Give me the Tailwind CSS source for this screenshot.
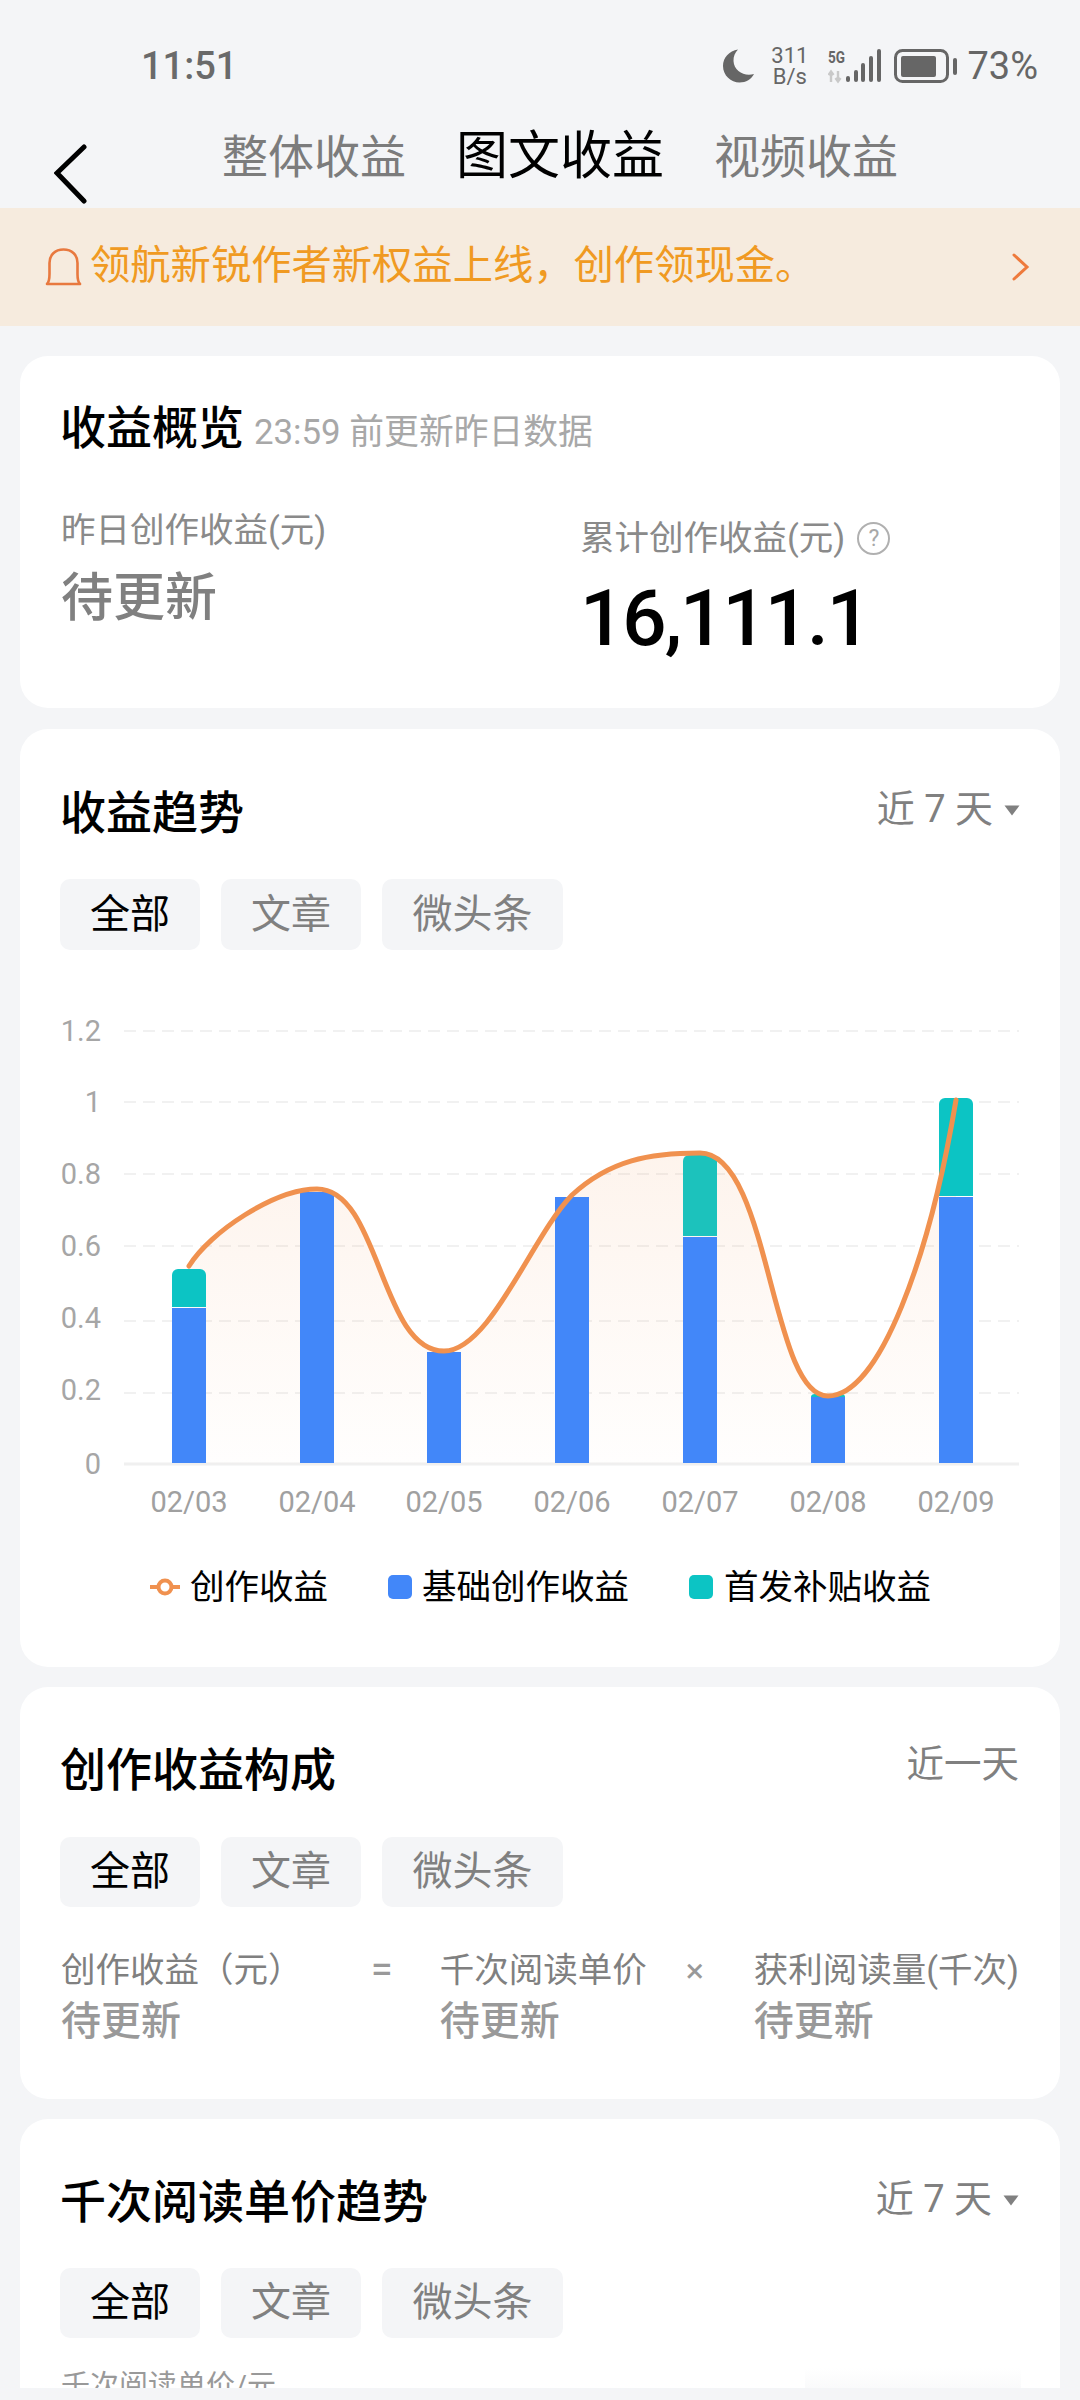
<!DOCTYPE html>
<html lang="zh">
<head>
<meta charset="utf-8">
<script src="https://cdn.jsdelivr.net/npm/@tailwindcss/browser@4"></script>
</head>
<body class="m-0 bg-[#f4f5f7] font-['Roboto','Noto_Sans_CJK_SC',sans-serif]">
<div class="w-[1080px] h-[2400px] overflow-hidden bg-[#f4f5f7] flex flex-col">

  <!-- status bar -->
  <div class="h-[112px] shrink-0 pt-[20px] flex items-start text-[#666666]">
    <div class="h-[92px] w-full flex items-center pl-[141px] pr-[42px]">
      <span class="text-[38px] leading-none font-medium text-[#6a6a6a]">11:51</span>
      <div class="ml-auto flex items-center">
        <svg width="34" height="36" viewBox="0 0 34 36" class="mr-[15px]"><path d="M16 1.5 C7 3 1 9.5 1 18 C1 27.5 9 34.5 17.5 34.5 C24 34.5 29.5 31 32 26 C22.5 29 12 23 11.5 13 C11.3 8.5 13 4.5 16 1.5 Z" fill="#666666"/></svg>
        <div class="flex flex-col items-center text-[22px] leading-[21px] mr-[20px] text-[#666666]"><span>311</span><span>B/s</span></div>
        <svg width="56" height="36" viewBox="0 0 56 36" class="mr-[10px]">
          <path d="M3 34 V24 M0.5 27 L3 23.5 L5.5 27" stroke="#c9c9c9" stroke-width="2.4" fill="none"/>
          <path d="M10 23 V33 M7.5 30 L10 33.5 L12.5 30" stroke="#c9c9c9" stroke-width="2.4" fill="none"/>
          <rect x="18" y="28" width="4" height="6" rx="2" fill="#666666"/>
          <rect x="26" y="22" width="4" height="12" rx="2" fill="#666666"/>
          <rect x="33" y="15" width="4" height="19" rx="2" fill="#666666"/>
          <rect x="41" y="8" width="4" height="26" rx="2" fill="#666666"/>
          <rect x="49" y="1" width="4" height="33" rx="2" fill="#666666"/>
          <text x="0" y="15" font-size="17" font-weight="700" fill="#666666" textLength="17" lengthAdjust="spacingAndGlyphs">5G</text>
        </svg>
        <svg width="64" height="34" viewBox="0 0 64 34" class="mr-[9px]">
          <rect x="1.5" y="1.5" width="52" height="31" rx="7" fill="none" stroke="#666666" stroke-width="3"/>
          <rect x="7" y="7" width="35" height="21" rx="2" fill="#666666"/>
          <rect x="59" y="9" width="4" height="17" rx="2" fill="#666666"/>
        </svg>
        <span class="text-[38px] leading-none text-[#666666]">73%</span>
      </div>
    </div>
  </div>

  <!-- tabs -->
  <div class="h-[96px] shrink-0 flex items-start pl-[54px]">
    <svg width="34" height="60" viewBox="0 0 34 60" class="mt-[32px] shrink-0"><path d="M30 3 L3 29 L30 57" fill="none" stroke="#000000" stroke-width="5" stroke-linecap="round" stroke-linejoin="miter"/></svg>
    <div class="ml-[134px] flex items-center gap-[50px] h-[90px]">
      <span class="text-[46px] leading-none text-[#7c7c7c]">整体收益</span>
      <span class="text-[52px] leading-none text-black">图文收益</span>
      <span class="text-[46px] leading-none text-[#7c7c7c]">视频收益</span>
    </div>
  </div>

  <!-- banner -->
  <div class="h-[118px] shrink-0 bg-[#f6ebde] flex items-center pl-[45px] pr-[50px]">
    <svg width="37" height="38" viewBox="0 0 37 38" class="shrink-0 mr-[8px]"><path d="M2 36 C4 34 4.5 30 4.5 26 V15 C4.5 7 10 1.5 18.5 1.5 C27 1.5 32.5 7 32.5 15 V26 C32.5 30 33 34 35 36 Z" fill="none" stroke="#e8793f" stroke-width="2.6" stroke-linejoin="round"/></svg>
    <span class="text-[40.3px] leading-none text-[#f09a22] whitespace-nowrap -mt-[1px]">领航新锐作者新权益上线，创作领现金。</span>
    <svg width="18" height="28" viewBox="0 0 18 28" class="ml-auto shrink-0"><path d="M2 2 L15 14 L2 26" fill="none" stroke="#ee7a3c" stroke-width="3" stroke-linecap="round"/></svg>
  </div>

  <!-- cards -->
  <div class="flex-1 min-h-0 flex flex-col gap-[20px] px-[20px] pt-[30px] pb-[12px]">

    <!-- overview -->
    <section class="h-[352px] shrink-0 bg-white rounded-[28px] pl-[41px] pr-[40px] pt-[50px]">
      <div class="flex items-center h-[44px]">
        <h2 class="text-[46px] leading-none font-medium text-black -ml-[1px]">收益概览</h2>
        <span class="ml-[10px] mt-[9px] text-[34.8px] leading-none text-[#a8a8a8]">23:59 前更新昨日数据</span>
      </div>
      <div class="flex mt-[62px]">
        <div class="w-[519px]">
          <div class="text-[34.5px] leading-[36px] text-[#8a8a8a]">昨日创作收益(元)</div>
          <div class="mt-[26px] text-[52px] leading-[50px] font-medium text-[#808080]">待更新</div>
        </div>
        <div class="pt-[8px]">
          <div class="flex items-center h-[36px]">
            <span class="text-[34.5px] leading-none text-[#8a8a8a]">累计创作收益(元)</span>
            <span class="ml-[12px] w-[33px] h-[33px] rounded-full border-[2px] border-[#b0b0b0] text-[#a8a8a8] text-[23px] leading-none flex items-center justify-center">?</span>
          </div>
          <div class="mt-[24px] text-[78px] leading-[78px] font-medium text-black tracking-[-2px]">16,111.1</div>
        </div>
      </div>
    </section>

    <!-- trend -->
    <section class="h-[938px] mt-[1px] shrink-0 bg-white rounded-[28px] pl-[40px] pr-[40px] pt-[62px]">
      <div class="flex items-center justify-between h-[44px]">
        <h2 class="text-[46px] leading-none font-medium text-black">收益趋势</h2>
        <div class="flex items-center text-[38px] leading-none text-[#808080] mb-[8px]">
          <span>近 7 天</span>
          <svg width="16" height="11" viewBox="0 0 16 11" class="ml-[11px] mt-[2px]"><path d="M0.5 0.5 H15.5 L8 10.5 Z" fill="#808080"/></svg>
        </div>
      </div>
      <div class="flex gap-[21px] mt-[44px]">
        <span class="h-[71px] px-[30px] rounded-[10px] bg-[#f4f5f7] flex items-center text-[40px] leading-none text-black">全部</span>
        <span class="h-[71px] px-[30px] rounded-[10px] bg-[#f4f5f7] flex items-center text-[40px] leading-none text-[#808080]">文章</span>
        <span class="h-[71px] px-[30.5px] rounded-[10px] bg-[#f4f5f7] flex items-center text-[40px] leading-none text-[#808080]">微头条</span>
      </div>
      <svg width="1040" height="620" viewBox="20 1000 1040 620" class="block -ml-[40px] mt-[50px]">
        <defs>
          <linearGradient id="area" x1="0" y1="0" x2="0" y2="1">
            <stop offset="0" stop-color="#f39a5b" stop-opacity="0.13"/>
            <stop offset="1" stop-color="#f39a5b" stop-opacity="0.01"/>
          </linearGradient>
        </defs>
        <g stroke="#f1f1f1" stroke-width="2" stroke-dasharray="12 7">
          <line x1="124" x2="1019" y1="1031" y2="1031"/>
          <line x1="124" x2="1019" y1="1102" y2="1102"/>
          <line x1="124" x2="1019" y1="1174" y2="1174"/>
          <line x1="124" x2="1019" y1="1246" y2="1246"/>
          <line x1="124" x2="1019" y1="1321" y2="1321"/>
          <line x1="124" x2="1019" y1="1393" y2="1393"/>
        </g>
        <line x1="124" x2="1019" y1="1464" y2="1464" stroke="#f0f0f0" stroke-width="3"/>
        <g fill="#a6a6a6" font-size="29" text-anchor="end">
          <text x="101" y="1041">1.2</text>
          <text x="101" y="1112">1</text>
          <text x="101" y="1184">0.8</text>
          <text x="101" y="1256">0.6</text>
          <text x="101" y="1328">0.4</text>
          <text x="101" y="1400">0.2</text>
          <text x="101" y="1474">0</text>
        </g>
        <path d="M189 1266 C210 1232 275 1189 317 1189 C380 1189 380 1351 444 1351 C490 1351 532 1236 572 1195 C610 1160 650 1153 700 1153 C770 1153 770 1396 828 1396 C880 1396 930 1255 956 1100 L956 1464 L189 1464 Z" fill="url(#area)"/>
        <rect x="172" y="1308" width="34" height="155" fill="#4287f9"/>
        <path d="M172 1307 V1275 a6 6 0 0 1 6-6 h22 a6 6 0 0 1 6 6 V1307 Z" fill="#0cc4c4"/>
        <rect x="300" y="1192" width="34" height="271" fill="#4287f9"/>
        <rect x="427" y="1352" width="34" height="111" fill="#4287f9"/>
        <rect x="555" y="1197" width="34" height="266" fill="#4287f9"/>
        <rect x="683" y="1237" width="34" height="226" fill="#4287f9"/>
        <path d="M683 1236 V1161 a6 6 0 0 1 6-6 h22 a6 6 0 0 1 6 6 V1236 Z" fill="#1cc2bc"/>
        <rect x="811" y="1397" width="34" height="66" fill="#4287f9"/>
        <path d="M811 1397 a4 3 0 0 1 4-3 h26 a4 3 0 0 1 4 3 Z" fill="#0cc4c4"/>
        <rect x="939" y="1197" width="34" height="266" fill="#4287f9"/>
        <path d="M939 1196 V1104 a6 6 0 0 1 6-6 h22 a6 6 0 0 1 6 6 V1196 Z" fill="#0cc4c4"/>
        <path d="M189 1266 C210 1232 275 1189 317 1189 C380 1189 380 1351 444 1351 C490 1351 532 1236 572 1195 C610 1160 650 1153 700 1153 C770 1153 770 1396 828 1396 C880 1396 930 1255 956 1100" fill="none" stroke="#f0914f" stroke-width="5" stroke-linecap="round"/>
        <g fill="#a0a0a0" font-size="29" text-anchor="middle">
          <text x="189" y="1512">02/03</text>
          <text x="317" y="1512">02/04</text>
          <text x="444" y="1512">02/05</text>
          <text x="572" y="1512">02/06</text>
          <text x="700" y="1512">02/07</text>
          <text x="828" y="1512">02/08</text>
          <text x="956" y="1512">02/09</text>
        </g>
        <line x1="150" x2="180" y1="1587" y2="1587" stroke="#f0914f" stroke-width="4"/>
        <circle cx="165" cy="1587" r="6.5" fill="#ffffff" stroke="#f0914f" stroke-width="4"/>
        <text x="190" y="1599" font-size="34.5" fill="#000000">创作收益</text>
        <rect x="388" y="1575" width="24" height="24" rx="5" fill="#4287f9"/>
        <text x="422" y="1599" font-size="34.5" fill="#000000">基础创作收益</text>
        <rect x="689" y="1575" width="24" height="24" rx="5" fill="#0cc4c4"/>
        <text x="724" y="1599" font-size="34.5" fill="#000000">首发补贴收益</text>
      </svg>
    </section>

    <!-- composition -->
    <section class="h-[412px] shrink-0 bg-white rounded-[28px] pl-[39px] pr-[41px] pt-[61px]">
      <div class="flex items-center justify-between h-[44px] pl-[1px]">
        <h2 class="text-[46px] leading-none font-medium text-black">创作收益构成</h2>
        <span class="text-[37.5px] leading-none text-[#808080] mb-[10px]">近一天</span>
      </div>
      <div class="flex gap-[21px] mt-[45px] pl-[1px]">
        <span class="h-[70px] px-[30px] rounded-[10px] bg-[#f4f5f7] flex items-center text-[40px] leading-none text-black">全部</span>
        <span class="h-[70px] px-[30px] rounded-[10px] bg-[#f4f5f7] flex items-center text-[40px] leading-none text-[#808080]">文章</span>
        <span class="h-[70px] px-[30.5px] rounded-[10px] bg-[#f4f5f7] flex items-center text-[40px] leading-none text-[#808080]">微头条</span>
      </div>
      <div class="flex justify-between mt-[45px] pl-[2px]">
        <div class="w-[310px]">
          <div class="text-[34.5px] leading-[36px] text-[#808080]">创作收益（元）</div>
          <div class="mt-[14px] text-[40px] leading-[40px] font-medium text-[#999999]">待更新</div>
        </div>
        <div class="w-[69px] text-[40px] leading-[36px] text-[#999999]">=</div>
        <div class="w-[246px]">
          <div class="text-[34.5px] leading-[36px] text-[#808080]">千次阅读单价</div>
          <div class="mt-[14px] text-[40px] leading-[40px] font-medium text-[#999999]">待更新</div>
        </div>
        <div class="w-[68px] text-[34px] leading-[36px] text-[#999999]">×</div>
        <div class="flex-1">
          <div class="text-[34.5px] leading-[36px] text-[#808080] whitespace-nowrap">获利阅读量(千次)</div>
          <div class="mt-[14px] text-[40px] leading-[40px] font-medium text-[#999999]">待更新</div>
        </div>
      </div>
    </section>

    <!-- unit price trend -->
    <section class="h-[269px] shrink-0 bg-white rounded-t-[28px] overflow-hidden pl-[39px] pr-[41px] pt-[61px] relative">
      <div class="flex items-center justify-between h-[44px] pl-[1px]">
        <h2 class="text-[46px] leading-none font-medium text-black">千次阅读单价趋势</h2>
        <div class="flex items-center text-[38px] leading-none text-[#808080] mb-[6px]">
          <span>近 7 天</span>
          <svg width="16" height="11" viewBox="0 0 16 11" class="ml-[11px] mt-[2px]"><path d="M0.5 0.5 H15.5 L8 10.5 Z" fill="#808080"/></svg>
        </div>
      </div>
      <div class="flex gap-[21px] mt-[44px] pl-[1px]">
        <span class="h-[70px] px-[30px] rounded-[10px] bg-[#f4f5f7] flex items-center text-[40px] leading-none text-black">全部</span>
        <span class="h-[70px] px-[30px] rounded-[10px] bg-[#f4f5f7] flex items-center text-[40px] leading-none text-[#808080]">文章</span>
        <span class="h-[70px] px-[30.5px] rounded-[10px] bg-[#f4f5f7] flex items-center text-[40px] leading-none text-[#808080]">微头条</span>
      </div>
      <div class="mt-[32px] pl-[2px] text-[29px] leading-[32px] text-[#999999] whitespace-nowrap">千次阅读单价/元</div>
      <div class="absolute right-[39px] bottom-0 w-[216px] h-[20px] bg-gradient-to-b from-white to-[#f4f5f7]/50"></div>
    </section>
  </div>
</div>
</body>
</html>
